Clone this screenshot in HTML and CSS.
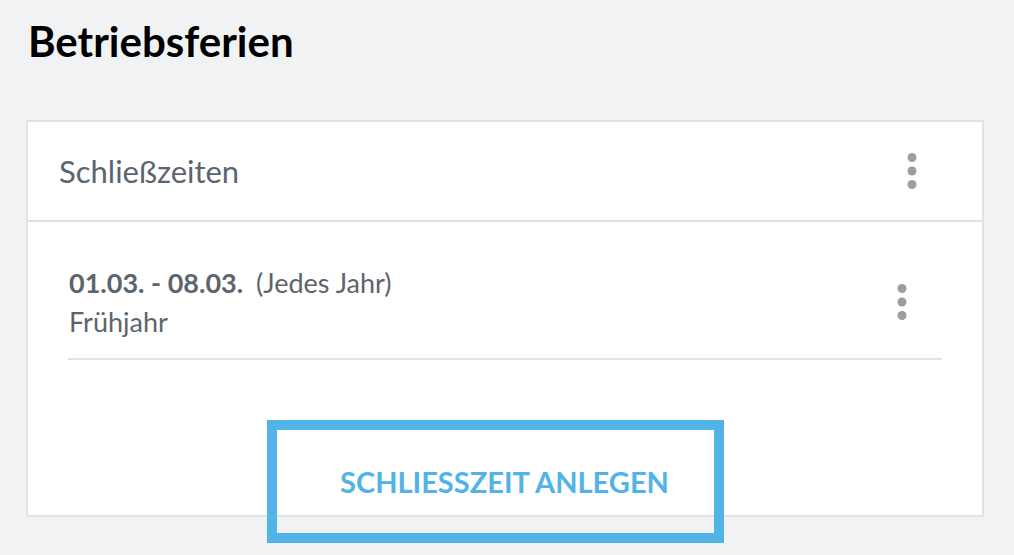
FILE: index.html
```html
<!doctype html>
<html lang="de">
    <head>
        <meta charset="UTF-8" />
        <meta name="viewport" content="width=device-width, initial-scale=1.0" />
        <title>Betriebsferien</title>
        <link rel="stylesheet" href="styles.css">
    </head>
    <body>
        <div class="page">
            <h1>Betriebsferien</h1>

            <div class="card">
                <div class="card-header">
                    <span class="card-title">Schließzeiten</span>
                    <button class="menu-button" aria-label="Menü">
                        <svg width="10" height="37" viewBox="0 0 10 37">
                            <circle cx="5" cy="4.5" r="4.5" />
                            <circle cx="5" cy="18" r="4.5" />
                            <circle cx="5" cy="31.5" r="4.5" />
                        </svg>
                    </button>
                </div>

                <div class="card-body">
                    <div class="closure">
                        <div class="closure-text">
                            <div class="closure-dates">
                                <strong>01.03. - 08.03.</strong>
                                <span>(Jedes Jahr)</span>
                            </div>
                            <div class="closure-name">Frühjahr</div>
                        </div>
                        <button class="menu-button" aria-label="Menü">
                            <svg width="10" height="37" viewBox="0 0 10 37">
                                <circle cx="5" cy="4.5" r="4.5" />
                                <circle cx="5" cy="18" r="4.5" />
                                <circle cx="5" cy="31.5" r="4.5" />
                            </svg>
                        </button>
                    </div>

                    <div class="actions">
                        <button class="add-button">SCHLIESSZEIT ANLEGEN</button>
                    </div>
                </div>
            </div>
        </div>
    </body>
</html>
```

FILE: styles.css
```css
* {
    box-sizing: border-box;
}
html,
body {
    min-height: 100%;
}
body {
    margin: 0;
    background-color: #f1f2f4;
    font-family: Lato, "Open Sans", sans-serif;
    color: #5b656e;
}
.page {
    padding: 0 30px 40px 26px;
}
h1 {
    margin: 0;
    padding: 16px 0 0 2px;
    height: 120px;
    font-size: 42px;
    font-weight: 700;
    line-height: 50px;
    color: #000;
}
.card {
    background-color: #fff;
    border: 2px solid #dfe3e6;
}
.card-header {
    display: flex;
    align-items: center;
    justify-content: space-between;
    height: 100px;
    padding: 0 65px 0 31px;
    border-bottom: 2px solid #dfe3e6;
}
.card-title {
    font-size: 31px;
}
.menu-button {
    display: flex;
    padding: 0;
    border: none;
    background: none;
    cursor: pointer;
}
.menu-button svg {
    fill: #9a9ea3;
}
.card-body {
    padding: 0 40px;
}
.closure {
    display: flex;
    align-items: center;
    justify-content: space-between;
    height: 138px;
    padding: 41px 35px 17px 1px;
    border-bottom: 2px solid #e0e4e7;
}
.closure-dates,
.closure-name {
    font-size: 27px;
    line-height: 39px;
}
.closure-dates strong {
    margin-right: 6px;
}
.actions {
    display: flex;
    justify-content: center;
    padding-top: 60px;
}
.add-button {
    height: 123px;
    margin: 0 19px -28px 0;
    padding: 0 45px 0 63px;
    border: 10px solid #52b3e6;
    background: none;
    color: #52b3e6;
    font-family: Lato, "Open Sans", sans-serif;
    font-size: 29px;
    font-weight: 700;
    cursor: pointer;
}
```
